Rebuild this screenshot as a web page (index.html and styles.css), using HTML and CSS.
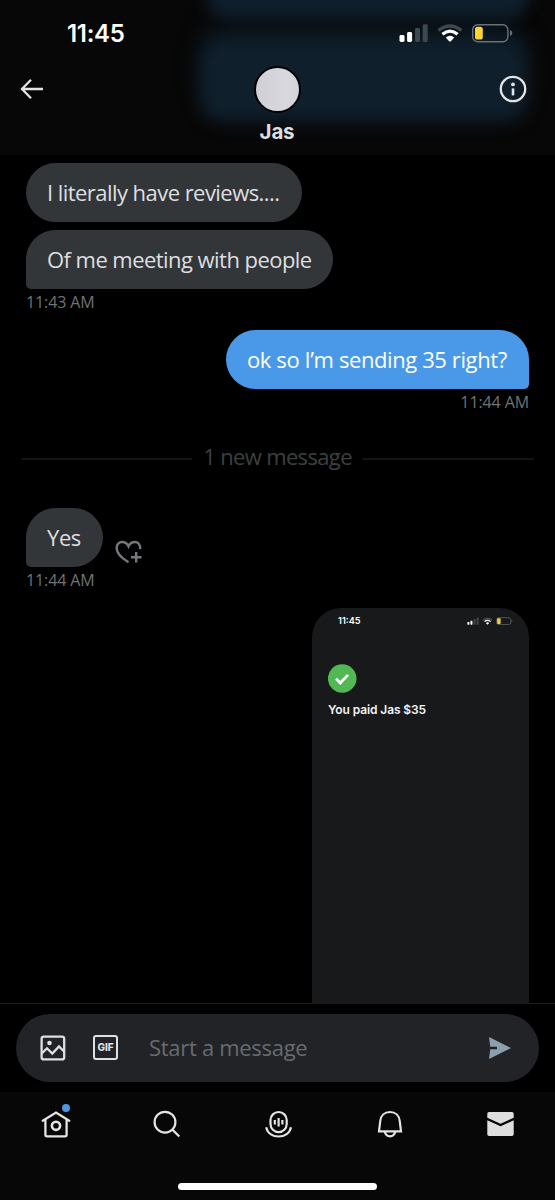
FILE: index.html
```html
<!DOCTYPE html>
<html lang="en">
<head>
<meta charset="utf-8">
<title>Jas</title>
<link rel="stylesheet" href="styles.css">
</head>
<body>
<div class="phone">
  <header class="header">
    <div class="glow glow-top"></div>
    <div class="glow glow-main"></div>
    <div class="status">
      <span class="clock">11:45</span>
      <svg class="status-icons" width="115" height="20" viewBox="0 0 115 20">
        <g fill="#fff"><rect x="0.500" y="11" width="5" height="7" rx="1.4"/><rect x="8.1" y="8" width="5" height="10" rx="1.4"/></g>
        <g fill="#3d4951"><rect x="16" y="4" width="5" height="14" rx="1.4"/><rect x="23.7" y="0.2" width="5" height="17.8" rx="1.4"/></g>
        <g fill="none" stroke-width="3.2"><path d="M39.500 6.6Q51-2.6 62.400 6.6" stroke="#3d4951"/><path d="M43.400 10.3Q51 3.9 58.600 10.3" stroke="#fff"/></g>
        <path d="M46.800 13.6Q51 10 55.200 13.6L51.900 17.2Q51 18 50.1 17.2Z" fill="#fff"/>
        <rect x="73.700" y="0.7" width="35.200" height="17" rx="5" fill="none" stroke="#66727a" stroke-width="1.4"/>
        <rect x="76" y="2.8" width="7.8" height="12.8" rx="2.6" fill="#fbd431"/>
        <path d="M111 6Q113.300 7 113.300 9T111 12Z" fill="#66727a"/>
      </svg>
    </div>
    <div class="bar">
      <svg class="back" width="24" height="22" viewBox="0 0 24 22" fill="none" stroke="#e2e3e4" stroke-width="2.3"><path d="M23 11H2.2M11 1.8L2 11l9 9.200"/></svg>
      <div class="contact">
        <div class="avatar"></div>
        <div class="name">Jas</div>
      </div>
      <svg class="info" width="28" height="28" viewBox="0 0 28 28"><circle cx="14" cy="14" r="12.200" fill="none" stroke="#e1e5e8" stroke-width="2.300"/><circle cx="14" cy="9.400" r="1.900" fill="#e1e5e8"/><rect x="12.700" y="13.400" width="2.600" height="7" fill="#e1e5e8"/></svg>
    </div>
  </header>

  <main class="chat">
    <div class="bubble in round b1"><span class="t1">I literally have reviews....</span></div>
    <div class="bubble in b2"><span class="t2">Of me meeting with people</span></div>
    <div class="time">11:43 AM</div>
    <div class="bubble out b3"><span class="t3">ok so I’m sending 35 right?</span></div>
    <div class="time right">11:44 AM</div>
    <div class="divider"><span class="new">1 new message</span></div>
    <div class="reply">
      <div class="bubble in b4"><span class="t4">Yes</span></div>
      <svg class="react" width="28" height="24" viewBox="0 0 28 24" fill="none" stroke="#74777b" stroke-width="2.400"><path d="M13.500 22.200C6 17.800 1.600 12.800 1.600 7.800 1.600 4.400 4 2 7.200 2c2.800 0 5 1.500 6.300 4.300C14.800 3.500 17 2 19.800 2c3.400 0 5.800 2.800 5.400 7.200M21.200 12v10.500M16 17.200h10.500"/></svg>
    </div>
    <div class="time">11:44 AM</div>
    <div class="shot">
      <div class="shot-status">
        <span class="shot-clock">11:45</span>
        <svg width="46" height="9" viewBox="0 0 115 22">
          <g fill="#fff"><rect x="1" y="12" width="5" height="7" rx="1"/><rect x="8.600" y="9" width="5" height="10" rx="1"/></g>
          <g fill="#45474a"><rect x="16.500" y="5" width="5" height="14" rx="1"/><rect x="24.200" y="1" width="5" height="18" rx="1"/></g>
          <g fill="none" stroke-width="3.200"><path d="M40 7.600Q51.400-1.600 62.800 7.600" stroke="#55575a"/><path d="M43.800 11.300Q51.400 4.900 59 11.300" stroke="#fff"/></g>
          <path d="M47.200 14.600Q51.400 11 55.600 14.600L51.400 19Z" fill="#fff"/>
          <rect x="74.200" y="1.500" width="35.200" height="17" rx="5" fill="none" stroke="#606265" stroke-width="2"/>
          <rect x="75.300" y="2.600" width="8.800" height="14.800" rx="2" fill="#e8cf45"/>
          <path d="M111.300 7Q113.600 8 113.600 10T111.300 13Z" fill="#606265"/>
        </svg>
      </div>
      <svg class="check" width="29" height="29" viewBox="0 0 29 29"><circle cx="14.200" cy="14.500" r="14.300" fill="#52b853"/><path d="M8.100 14.700l4.200 4.200 7.700-8" fill="none" stroke="#fff" stroke-width="2.800"/></svg>
      <div class="paid">You paid Jas $35</div>
    </div>
  </main>

  <section class="composer">
    <div class="field">
      <svg width="26" height="26" viewBox="0 0 26 26" fill="none" stroke="#dfe0e1" stroke-width="2.300"><rect x="1.600" y="1.600" width="22.600" height="22.800" rx="2.200"/><path d="M2 18.300l5-5 5.300 5.200 6.700-7 5 5"/><circle cx="9.500" cy="8" r="2.300" fill="#dfe0e1" stroke="none"/></svg>
      <div class="gif">GIF</div>
      <span class="placeholder">Start a message</span>
      <svg class="send" width="22" height="22" viewBox="0 0 22 22"><path d="M0 0L22 11 0 22 1.200 12.200H8V9.800H1.200Z" fill="#8b9fae"/></svg>
    </div>
  </section>

  <nav class="tabs">
    <div class="tab home">
      <svg width="30" height="30" viewBox="0 0 30 30" fill="none" stroke="#e4e4e4" stroke-width="2.300"><path d="M1 12.200L15 3.500l14 8.700M4.400 10.500V25.800q0 1.600 1.600 1.600h18q1.600 0 1.600-1.600V10.500"/><circle cx="15" cy="16.800" r="4.100" stroke-width="2.600"/></svg>
      <i class="dot"></i>
    </div>
    <div class="tab"><svg width="30" height="30" viewBox="0 0 30 30" fill="none" stroke="#e4e4e4" stroke-width="2.200"><circle cx="13" cy="13.200" r="10.400"/><path d="M20.400 20.600l6.900 6.900"/></svg></div>
    <div class="tab"><svg width="30" height="30" viewBox="0 0 30 30" fill="none" stroke="#e4e4e4" stroke-width="2.200"><rect x="7.500" y="3" width="16.200" height="20.200" rx="8.100"/><path d="M15.600 9v8.500M11.800 11v4.500M19.400 11v4.500M3.200 18.200C4.500 24.200 9.500 27.500 15.600 27.500S26.700 24.200 28 18.200"/></svg></div>
    <div class="tab"><svg width="30" height="30" viewBox="0 0 30 30" fill="none" stroke="#e4e4e4" stroke-width="2.200"><path d="M5.200 12.300C5.700 6.500 9.700 3 15 3s9.300 3.500 9.800 9.300L26 22.300H4ZM9.600 22.500c.8 3 2.800 4.900 5.400 4.900s4.600-1.900 5.400-4.900"/></svg></div>
    <div class="tab"><svg width="30" height="30" viewBox="0 0 30 30" fill="#dedede"><path d="M1.300 4.800q0-1.800 1.800-1.800h22.800q1.800 0 1.800 1.800v4L14.500 14.700 1.300 8.800ZM1.300 11.300l13.200 6 13.200-6V25.200q0 1.800-1.800 1.800H3.100q-1.800 0-1.800-1.800Z"/></svg></div>
  </nav>
  <div class="home-bar"></div>
</div>
</body>
</html>
```
FILE: styles.css
```css
* { box-sizing: border-box; }
body { margin: 0; background: #000; }
svg { display: block; flex: none; }
.phone { width: 555px; height: 1200px; display: flex; flex-direction: column; overflow: hidden; background: #000; color: #dddfe0; font-family: "Open Sans", sans-serif; white-space: nowrap; }

.header { position: relative; height: 155px; flex: none; background: #070707; overflow: hidden; }
.glow { position: absolute; background: #0f1f2c; }
.glow-top { left: 207px; top: -30px; width: 321px; height: 50px; border-radius: 20px; filter: blur(7px); }
.glow-main { left: 199px; top: 40px; width: 329px; height: 82px; border-radius: 24px; filter: blur(8px); box-shadow: 0 -15px 12px #0b171f; }
.status { position: relative; height: 60px; padding: 23px 41px 0 67px; display: flex; justify-content: space-between; }
.clock { font: 600 24px/21px Inter, sans-serif; color: #fff; letter-spacing: -0.3px; }
.status-icons { margin-top: 1px; }
.bar { position: relative; height: 95px; padding: 0 28px 0 20px; display: flex; justify-content: space-between; }
.back { margin-top: 18px; }
.contact { display: flex; flex-direction: column; align-items: center; padding-left: 11px; }
.avatar { width: 47px; height: 47px; margin-top: 6px; border: 2.500px solid #000; border-radius: 50%; background: linear-gradient(90deg, #d0cfd7, #d8d8dd 70%, #d3d2d9); }
.name { margin-top: 7px; font: 700 20.500px/24px Inter, sans-serif; letter-spacing: -0.2px; }
.info { margin-top: 15px; }

.chat { height: 848px; flex: none; padding: 7.500px 26px 0; display: flex; flex-direction: column; align-items: flex-start; overflow: hidden; }
.bubble { height: 59.500px; flex: none; padding-left: 21px; border-radius: 30px; font-size: 22px; line-height: 59px; }
.in { background: #333639; border-bottom-left-radius: 5px; }
.round { border-bottom-left-radius: 30px; }
.out { align-self: flex-end; background: #4a99e9; color: #fff; border-bottom-right-radius: 5px; }
.b1 { width: 276px; }
.b2 { width: 307px; margin-top: 7.500px; }
.b3 { width: 303px; margin-top: 17.500px; }
.b4 { width: 77px; }
.t1, .t2 { letter-spacing: -0.55px; }
.t3, .t4 { letter-spacing: -0.4px; }
.time { height: 23px; flex: none; font-size: 16px; line-height: 27px; letter-spacing: -0.1px; color: #707376; }
.divider { width: 513px; height: 30px; margin: 32px 0 0 -5px; display: flex; align-items: center; gap: 11px; font-size: 22px; line-height: 24px; letter-spacing: -0.65px; color: #3d4042; }
.right { align-self: flex-end; }
.divider::before, .divider::after { content: ""; flex: 1; height: 2px; background: #121314; margin-top: 5px; }
.reply { margin-top: 33px; padding-top: 6.500px; display: flex; gap: 12px; }
.react { margin-top: 32.500px; }
.shot { width: 217px; height: 420px; flex: none; align-self: flex-end; margin-top: 18px; border-radius: 29px 29px 0 0; background: #18191b; padding: 8px 16px; }
.shot-status { display: flex; justify-content: space-between; align-items: center; padding-left: 10px; height: 10px; }
.shot-clock { font: 600 9.200px/10px Inter, sans-serif; color: #fff; }
.check { margin-top: 38px; }
.paid { margin-top: 8px; font: 600 12px/18px Inter, sans-serif; letter-spacing: -0.1px; color: #f3f3f3; }

.composer { height: 89px; flex: none; border-top: 1px solid #1b1c1d; padding: 9.500px 16px 0; }
.field { height: 68.500px; border-radius: 35px; background: #212327; display: flex; align-items: center; padding: 0 28px 0 24px; }
.gif { width: 25px; height: 25px; margin-left: 27px; border: 2px solid #dfe0e1; border-radius: 3px; font: 800 10px/21px Inter, sans-serif; text-align: center; color: #dfe0e1; }
.placeholder { margin: -2px 0 0 31px; font-size: 22px; letter-spacing: -0.3px; color: #686b6f; }
.send { margin-left: auto; }

.tabs { height: 91px; flex: none; padding: 17px 0 0; background: #070707; display: grid; grid-template-columns: repeat(5, 111.300px); }
.tab { position: relative; display: flex; justify-content: center; height: 30px; }
.dot { position: absolute; left: 62px; top: -5px; width: 8px; height: 8px; border-radius: 50%; background: #4a99e9; }
.home-bar { flex: none; height: 17px; background: #070707; }
.home-bar::before { content: ""; display: block; width: 199px; height: 6.500px; margin-left: 178px; border-radius: 4px; background: #fff; }
```
